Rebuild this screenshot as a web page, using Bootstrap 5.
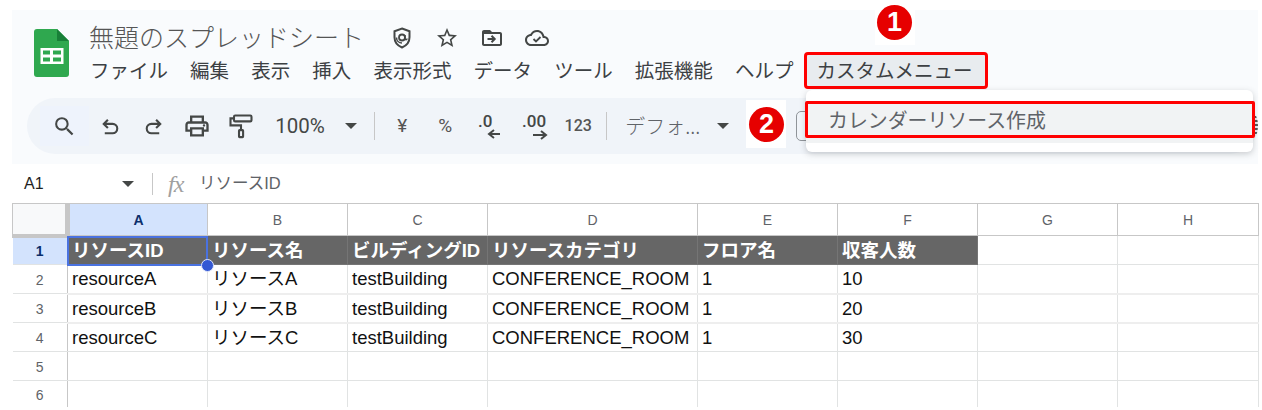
<!DOCTYPE html>
<html lang="ja">
<head>
  <meta charset="UTF-8">
  <title>無題のスプレッドシート</title>
  <meta name="viewport" content="width=device-width, initial-scale=1.0">
  <link rel="stylesheet" href="https://cdn.jsdelivr.net/npm/bootstrap@5.3.0/dist/css/bootstrap.min.css">
  <style>
    body {
      background: #fff;
      font-family: "Liberation Sans", "Noto Sans CJK JP", sans-serif;
      overflow: hidden;
    }
    .app-frame { position: relative; width: 1262px; height: 410px; overflow: hidden; padding-top: 10px; }

    /* header panel */
    .doc-panel { background: #f9fbfd; height: 154px; margin-left: 12px; width: 1246px; }
    .doc-head { height: 88px; }
    .doc-logo { width: 35px; height: 48px; margin: 19px 20px 0 22px; flex: none; }
    .doc-title { font-family: "Noto Sans CJK JP", sans-serif; font-weight: 300; font-size: 25px; line-height: 34px; color: #555; margin-top: 9px; }
    .title-icons { margin-left: 26px; margin-top: 16px; gap: 21px; }
    .title-icons svg { width: 24px; height: 24px; fill: #444746; display: block; }
    .menu-row { gap: 22.1px; margin-left: 1px; margin-top: 2px; font-family: "Noto Sans CJK JP", sans-serif; font-size: 19.5px; line-height: 30px; color: #3c4043; }
    .menu-active { background: #e8ecef; outline: 3px solid #f00; border-radius: 1px; margin: 0 0 0 -8px; padding: 0 12px 1px 9px; white-space: nowrap; }

    /* toolbar */
    .tool-strip { background: #f0f4f9; height: 56px; margin-left: 15px; padding-left: 13px; overflow: hidden; color: #444746; }
    .tool-btn { width: 43.3px; height: 40px; flex: none; }
    .tool-btn svg { width: 25px; height: 25px; }
    .tool-btn svg.tool-wide { width: 28px; height: 28px; }
    .tool-find { width: 49px; background: #eef3fc; }
    .tool-zoom { font-family: "Roboto", sans-serif; font-size: 20.5px; margin-left: 13px; width: 52px; flex: none; white-space: nowrap; }
    .tool-caret { width: 0; height: 0; border-left: 6px solid transparent; border-right: 6px solid transparent; border-top: 6px solid #444746; flex: none; }
    .zoom-caret { margin-left: 18px; }
    .font-caret { margin-right: 67px; }
    .tool-sep { width: 1px; height: 28px; background: #c7c7c7; flex: none; }
    .sep-first { margin: 0 5px 0 17px; }
    .sep-second { margin: 0 18px 0 6px; }
    .tool-sym { font-family: "Roboto", sans-serif; font-size: 19px; width: 44px; flex: none; text-align: center; color: #555; }
    .sym-tight { margin-left: -1px; }
    .sym-num { font-size: 16px; font-weight: 500; margin-left: -5px; }
    .tool-dec { width: 46px; height: 36px; flex: none; }
    .tool-dec svg { width: 46px; height: 36px; display: block; }
    .dec-less { margin-left: 3px; }
    .dec-more { margin-left: -1px; }
    .tool-font { font-family: "Noto Sans CJK JP", sans-serif; font-weight: 300; font-size: 20px; color: #5f6368; width: 92px; flex: none; white-space: nowrap; }
    .tool-sizebox { width: 30px; height: 30px; border: 1px solid #8f9499; border-radius: 5px; flex: none; }
    .tool-edge { width: 5px; height: 20px; flex: none; margin-left: auto; background: repeating-linear-gradient(#555 0 2px, #e4e7eb 2px 4px); }

    /* formula bar */
    .fx-row { height: 39px; color: #444; }
    .fx-ref { font-size: 16px; margin-left: 24px; width: 98px; color: #1f1f1f; }
    .fx-sep { width: 1px; height: 22px; background: #c7c7c7; margin: 0 15px 0 18px; }
    .fx-mark { font-family: "Liberation Serif", serif; font-style: italic; font-size: 24px; color: #a0a0a0; width: 31px; letter-spacing: -1px; }
    .fx-text { font-size: 16.5px; color: #5f6368; }

    /* grid */
    .sheet-grid { table-layout: fixed; width: 1246px; margin-left: 12px; border-collapse: collapse; font-size: 18.5px; }
    .grid-rowhead { width: 55px; }
    .grid-std { width: 140px; }
    .grid-wide { width: 210px; }
    .grid-last { width: 141px; }
    .sheet-grid th, .sheet-grid td {
      padding: 1px 0 0 4px; border: 1px solid #e1e3e3; white-space: nowrap; overflow: hidden;
      vertical-align: middle; color: #111; font-weight: 400; line-height: 20px; box-shadow: none; background: #fff;
    }
    .sheet-grid tr { height: 29px; }
    .sheet-grid .col-head { height: 32px; }
    .sheet-grid .col-head th { border-color: #c7c7c7; text-align: center; font-size: 14px; color: #5f6368; padding: 0; }
    .sheet-grid .col-head th.on-col { background: #d3e3fd; color: #0b2f6b; font-weight: 700; }
    .sheet-grid .col-head th.corner-cell { background: #f8f9fa; border-right: 5px solid #c7c7c7; border-bottom: 4px solid #c7c7c7; }
    .sheet-grid tbody th { text-align: center; padding: 1px 0 0; font-size: 14px; color: #5f6368; border-color: #c7c7c7; border-left: 0; border-bottom-color: #e1e3e3; }
    .sheet-grid tbody th.on-row { background: #d3e3fd; color: #0b2f6b; font-weight: 700; }
    .sheet-grid td.dark-cell { background: #666; color: #fff; font-weight: 700; border-color: #757575; }
    .sheet-grid .thick-row td { border-bottom: 2px solid #eee; }
    /* the screenshot is cut off part way down row 6 */
    .sheet-grid tbody, .sheet-grid tr.cut-row { border-bottom: 0; }
    .sheet-grid tr.cut-row { height: 26px; }
    .sheet-grid .cut-row th, .sheet-grid .cut-row td { border-bottom: 0; padding-top: 3px; }

    /* overlays */
    .cell-select { position: absolute; left: 67px; top: 236px; width: 141px; height: 30px; border: 2px solid #4a72e0; pointer-events: none; }
    .cell-handle { position: absolute; left: 201px; top: 259px; width: 13px; height: 13px; border-radius: 50%; background: #3358d4; border: 1px solid #dfe6fb; }
    .pop-menu { position: absolute; left: 806px; top: 90px; width: 447px; height: 62px; background: #fff; border-radius: 6px; box-shadow: 0 2px 6px rgba(60,64,67,.25); padding-top: 11px; }
    .pop-item { height: 42px; background: #f1f3f4; padding-left: 22px; padding-top: 4px; font-family: "Noto Sans CJK JP", sans-serif; font-size: 19.9px; line-height: 30px; color: #5f6368; white-space: nowrap; }
    .red-frame { position: absolute; left: 805px; top: 101px; width: 450px; height: 37px; border: 3px solid #f00; border-radius: 2px; }
    .step-tag { position: absolute; background: #fff; width: 40px; }
    .step-dot { width: 35px; height: 35px; background: #e60000; color: #fff; font-weight: 700; font-size: 27px; line-height: 1; font-family: "Liberation Sans", sans-serif; }
    .step-one { left: 875px; top: 4px; height: 41px; padding: 1px 0 0 2px; }
    .step-two { left: 746px; top: 100px; height: 48px; padding: 7px 0 0 3px; }
  </style>
</head>
<body>
<div class="app-frame">

  <div class="doc-panel">
    <div class="doc-head d-flex">
      <svg class="doc-logo" viewBox="0 0 35 48">
        <path d="M3 0H23L35 12V45a3 3 0 0 1-3 3H3a3 3 0 0 1-3-3V3a3 3 0 0 1 3-3z" fill="#2fa84f"/>
        <path d="M23 0L35 12H23z" fill="#188038"/>
        <path d="M6.5 19h23v16h-23zM9 21.5v4h7v-4zm10 0v4h8v-4zM9 28.500v4h7v-4zm10 0v4h8v-4z" fill="#fff" fill-rule="evenodd"/>
      </svg>
      <div>
        <div class="d-flex">
          <div class="doc-title">無題のスプレッドシート</div>
          <div class="title-icons d-flex">
            <svg viewBox="0 0 24 24"><path d="M12 2.500l7.500 2.800v6c0 4.700-3 8.400-7.500 10.200-4.500-1.800-7.500-5.500-7.500-10.200v-6z" fill="none" stroke="#444746" stroke-width="2"/><circle cx="12" cy="11.500" r="3" fill="none" stroke="#444746" stroke-width="1.800"/><path d="M15 9v3.500c0 1.500 2 1.500 2 0M12 17c-3 0-5.500-2-5.500-5.500" fill="none" stroke="#444746" stroke-width="1.500"/></svg>
            <svg viewBox="0 0 24 24"><path d="M22 9.240l-7.190-.62L12 2 9.190 8.630 2 9.240l5.460 4.730L5.820 21 12 17.270 18.180 21l-1.630-7.030L22 9.240zM12 15.400l-3.760 2.270 1-4.280-3.320-2.880 4.380-.38L12 6.100l1.710 4.040 4.380.38-3.320 2.880 1 4.280L12 15.400z"/></svg>
            <svg viewBox="0 0 24 24"><path d="M20 6h-8l-2-2H4c-1.100 0-2 .9-2 2v12c0 1.100.9 2 2 2h16c1.100 0 2-.9 2-2V8c0-1.100-.9-2-2-2zm0 12H4V8h16v10z"/><path d="M7.500 13h6.500M11.500 9.800l3.200 3.200-3.200 3.200" fill="none" stroke="#444746" stroke-width="2"/></svg>
            <svg viewBox="0 0 24 24"><path d="M19.350 10.040C18.670 6.590 15.640 4 12 4 9.110 4 6.600 5.640 5.350 8.040 2.340 8.360 0 10.910 0 14c0 3.310 2.690 6 6 6h13c2.760 0 5-2.240 5-5 0-2.640-2.050-4.780-4.650-4.960zM19 18H6c-2.210 0-4-1.790-4-4 0-2.050 1.530-3.760 3.560-3.970l1.070-.11.5-.95C8.080 7.140 9.940 6 12 6c2.620 0 4.880 1.860 5.390 4.430l.3 1.500 1.530.11c1.560.1 2.780 1.410 2.780 2.960 0 1.650-1.350 3-3 3z"/><path d="M8.500 13l2.500 2.500 4.500-4.500" fill="none" stroke="#444746" stroke-width="1.800"/></svg>
          </div>
        </div>
        <div class="menu-row d-flex">
          <span>ファイル</span><span>編集</span><span>表示</span><span>挿入</span><span>表示形式</span><span>データ</span><span>ツール</span><span>拡張機能</span><span>ヘルプ</span><span class="menu-active">カスタムメニュー</span>
        </div>
      </div>
    </div>

    <div class="tool-strip rounded-pill d-flex align-items-center">
      <div class="tool-btn tool-find d-flex align-items-center justify-content-center">
        <svg viewBox="0 0 24 24" fill="#444746"><path d="M15.500 14h-.79l-.28-.27A6.471 6.471 0 0 0 16 9.500 6.500 6.500 0 1 0 9.500 16c1.610 0 3.090-.59 4.230-1.570l.27.28v.79l5 4.990L20.490 19l-4.990-5zm-6 0C7.010 14 5 11.990 5 9.500S7.010 5 9.500 5 14 7.010 14 9.500 11.990 14 9.500 14z"/></svg>
      </div>
      <div class="tool-btn d-flex align-items-center justify-content-center">
        <svg viewBox="0 0 24 24" fill="none" stroke="#444746" stroke-width="2"><path d="M9.500 5.500L5.500 9.500l4 4M5.500 9.500H14a4.500 4.500 0 0 1 0 9H6.500"/></svg>
      </div>
      <div class="tool-btn d-flex align-items-center justify-content-center">
        <svg viewBox="0 0 24 24" fill="none" stroke="#444746" stroke-width="2"><path d="M14.500 5.500l4 4-4 4M18.500 9.500H10a4.500 4.500 0 0 0 0 9h7.500"/></svg>
      </div>
      <div class="tool-btn d-flex align-items-center justify-content-center">
        <svg class="tool-wide" viewBox="0 0 24 24" fill="#444746"><path d="M19 8h-1V3H6v5H5c-1.660 0-3 1.340-3 3v6h4v4h12v-4h4v-6c0-1.660-1.340-3-3-3zM8 5h8v3H8V5zm8 12v2H8v-4h8v2zm2-2v-2H6v2H4v-4c0-.55.45-1 1-1h14c.55 0 1 .45 1 1v4h-2z"/><circle cx="18" cy="11.500" r="1"/></svg>
      </div>
      <div class="tool-btn d-flex align-items-center justify-content-center">
        <svg class="tool-wide" viewBox="0 0 24 24" fill="none" stroke="#444746" stroke-width="1.800"><rect x="6" y="3" width="15" height="5" rx="1"/><path d="M6 5.500H3v6h9v4"/><rect x="10.300" y="15.500" width="3.500" height="6" rx=".5"/></svg>
      </div>
      <div class="tool-zoom">100%</div>
      <div class="tool-caret zoom-caret"></div>
      <div class="tool-sep sep-first"></div>
      <div class="tool-sym">¥</div>
      <div class="tool-sym sym-tight">%</div>
      <div class="tool-dec dec-less">
        <svg viewBox="0 0 46 36" fill="#444746"><text x="8" y="19" font-family="Roboto, sans-serif" font-size="17" font-weight="500">.0</text><path d="M19 26h11M24 22l-5 4 5 4" fill="none" stroke="#444746" stroke-width="2"/></svg>
      </div>
      <div class="tool-dec dec-more">
        <svg viewBox="0 0 46 36" fill="#444746"><text x="7" y="19" font-family="Roboto, sans-serif" font-size="17" font-weight="500">.00</text><path d="M18 27h12M26 23l5 4-5 4" fill="none" stroke="#444746" stroke-width="2"/></svg>
      </div>
      <div class="tool-sym sym-num">123</div>
      <div class="tool-sep sep-second"></div>
      <div class="tool-font">デフォ...</div>
      <div class="tool-caret font-caret"></div>
      <div class="tool-sizebox"></div>
      <div class="tool-edge"></div>
    </div>
  </div>

  <div class="fx-row d-flex align-items-center">
    <div class="fx-ref">A1</div>
    <div class="tool-caret"></div>
    <div class="fx-sep"></div>
    <div class="fx-mark">fx</div>
    <div class="fx-text">リソースID</div>
  </div>

  <table class="table table-bordered mb-0 sheet-grid">
    <colgroup>
      <col class="grid-rowhead"><col class="grid-std"><col class="grid-std"><col class="grid-std"><col class="grid-wide"><col class="grid-std"><col class="grid-std"><col class="grid-std"><col class="grid-last">
    </colgroup>
    <thead>
      <tr class="col-head">
        <th class="corner-cell"></th><th class="on-col">A</th><th>B</th><th>C</th><th>D</th><th>E</th><th>F</th><th>G</th><th>H</th>
      </tr>
    </thead>
    <tbody>
      <tr>
        <th class="on-row">1</th><td class="dark-cell">リソースID</td><td class="dark-cell">リソース名</td><td class="dark-cell">ビルディングID</td><td class="dark-cell">リソースカテゴリ</td><td class="dark-cell">フロア名</td><td class="dark-cell">収客人数</td><td></td><td></td>
      </tr>
      <tr class="thick-row">
        <th>2</th><td>resourceA</td><td>リソースA</td><td>testBuilding</td><td>CONFERENCE_ROOM</td><td>1</td><td>10</td><td></td><td></td>
      </tr>
      <tr class="thick-row">
        <th>3</th><td>resourceB</td><td>リソースB</td><td>testBuilding</td><td>CONFERENCE_ROOM</td><td>1</td><td>20</td><td></td><td></td>
      </tr>
      <tr>
        <th>4</th><td>resourceC</td><td>リソースC</td><td>testBuilding</td><td>CONFERENCE_ROOM</td><td>1</td><td>30</td><td></td><td></td>
      </tr>
      <tr><th>5</th><td></td><td></td><td></td><td></td><td></td><td></td><td></td><td></td></tr>
      <tr class="cut-row"><th>6</th><td></td><td></td><td></td><td></td><td></td><td></td><td></td><td></td></tr>
    </tbody>
  </table>

  <!-- selection and annotations sit above the sheet -->
  <div class="cell-select"></div>
  <div class="cell-handle"></div>
  <div class="pop-menu"><div class="pop-item">カレンダーリソース作成</div></div>
  <div class="red-frame"></div>
  <div class="step-tag step-one"><div class="step-dot rounded-circle d-flex align-items-center justify-content-center">1</div></div>
  <div class="step-tag step-two"><div class="step-dot rounded-circle d-flex align-items-center justify-content-center">2</div></div>
</div>
<script src="https://cdn.jsdelivr.net/npm/bootstrap@5.3.0/dist/js/bootstrap.bundle.min.js"></script>
</body>
</html>
